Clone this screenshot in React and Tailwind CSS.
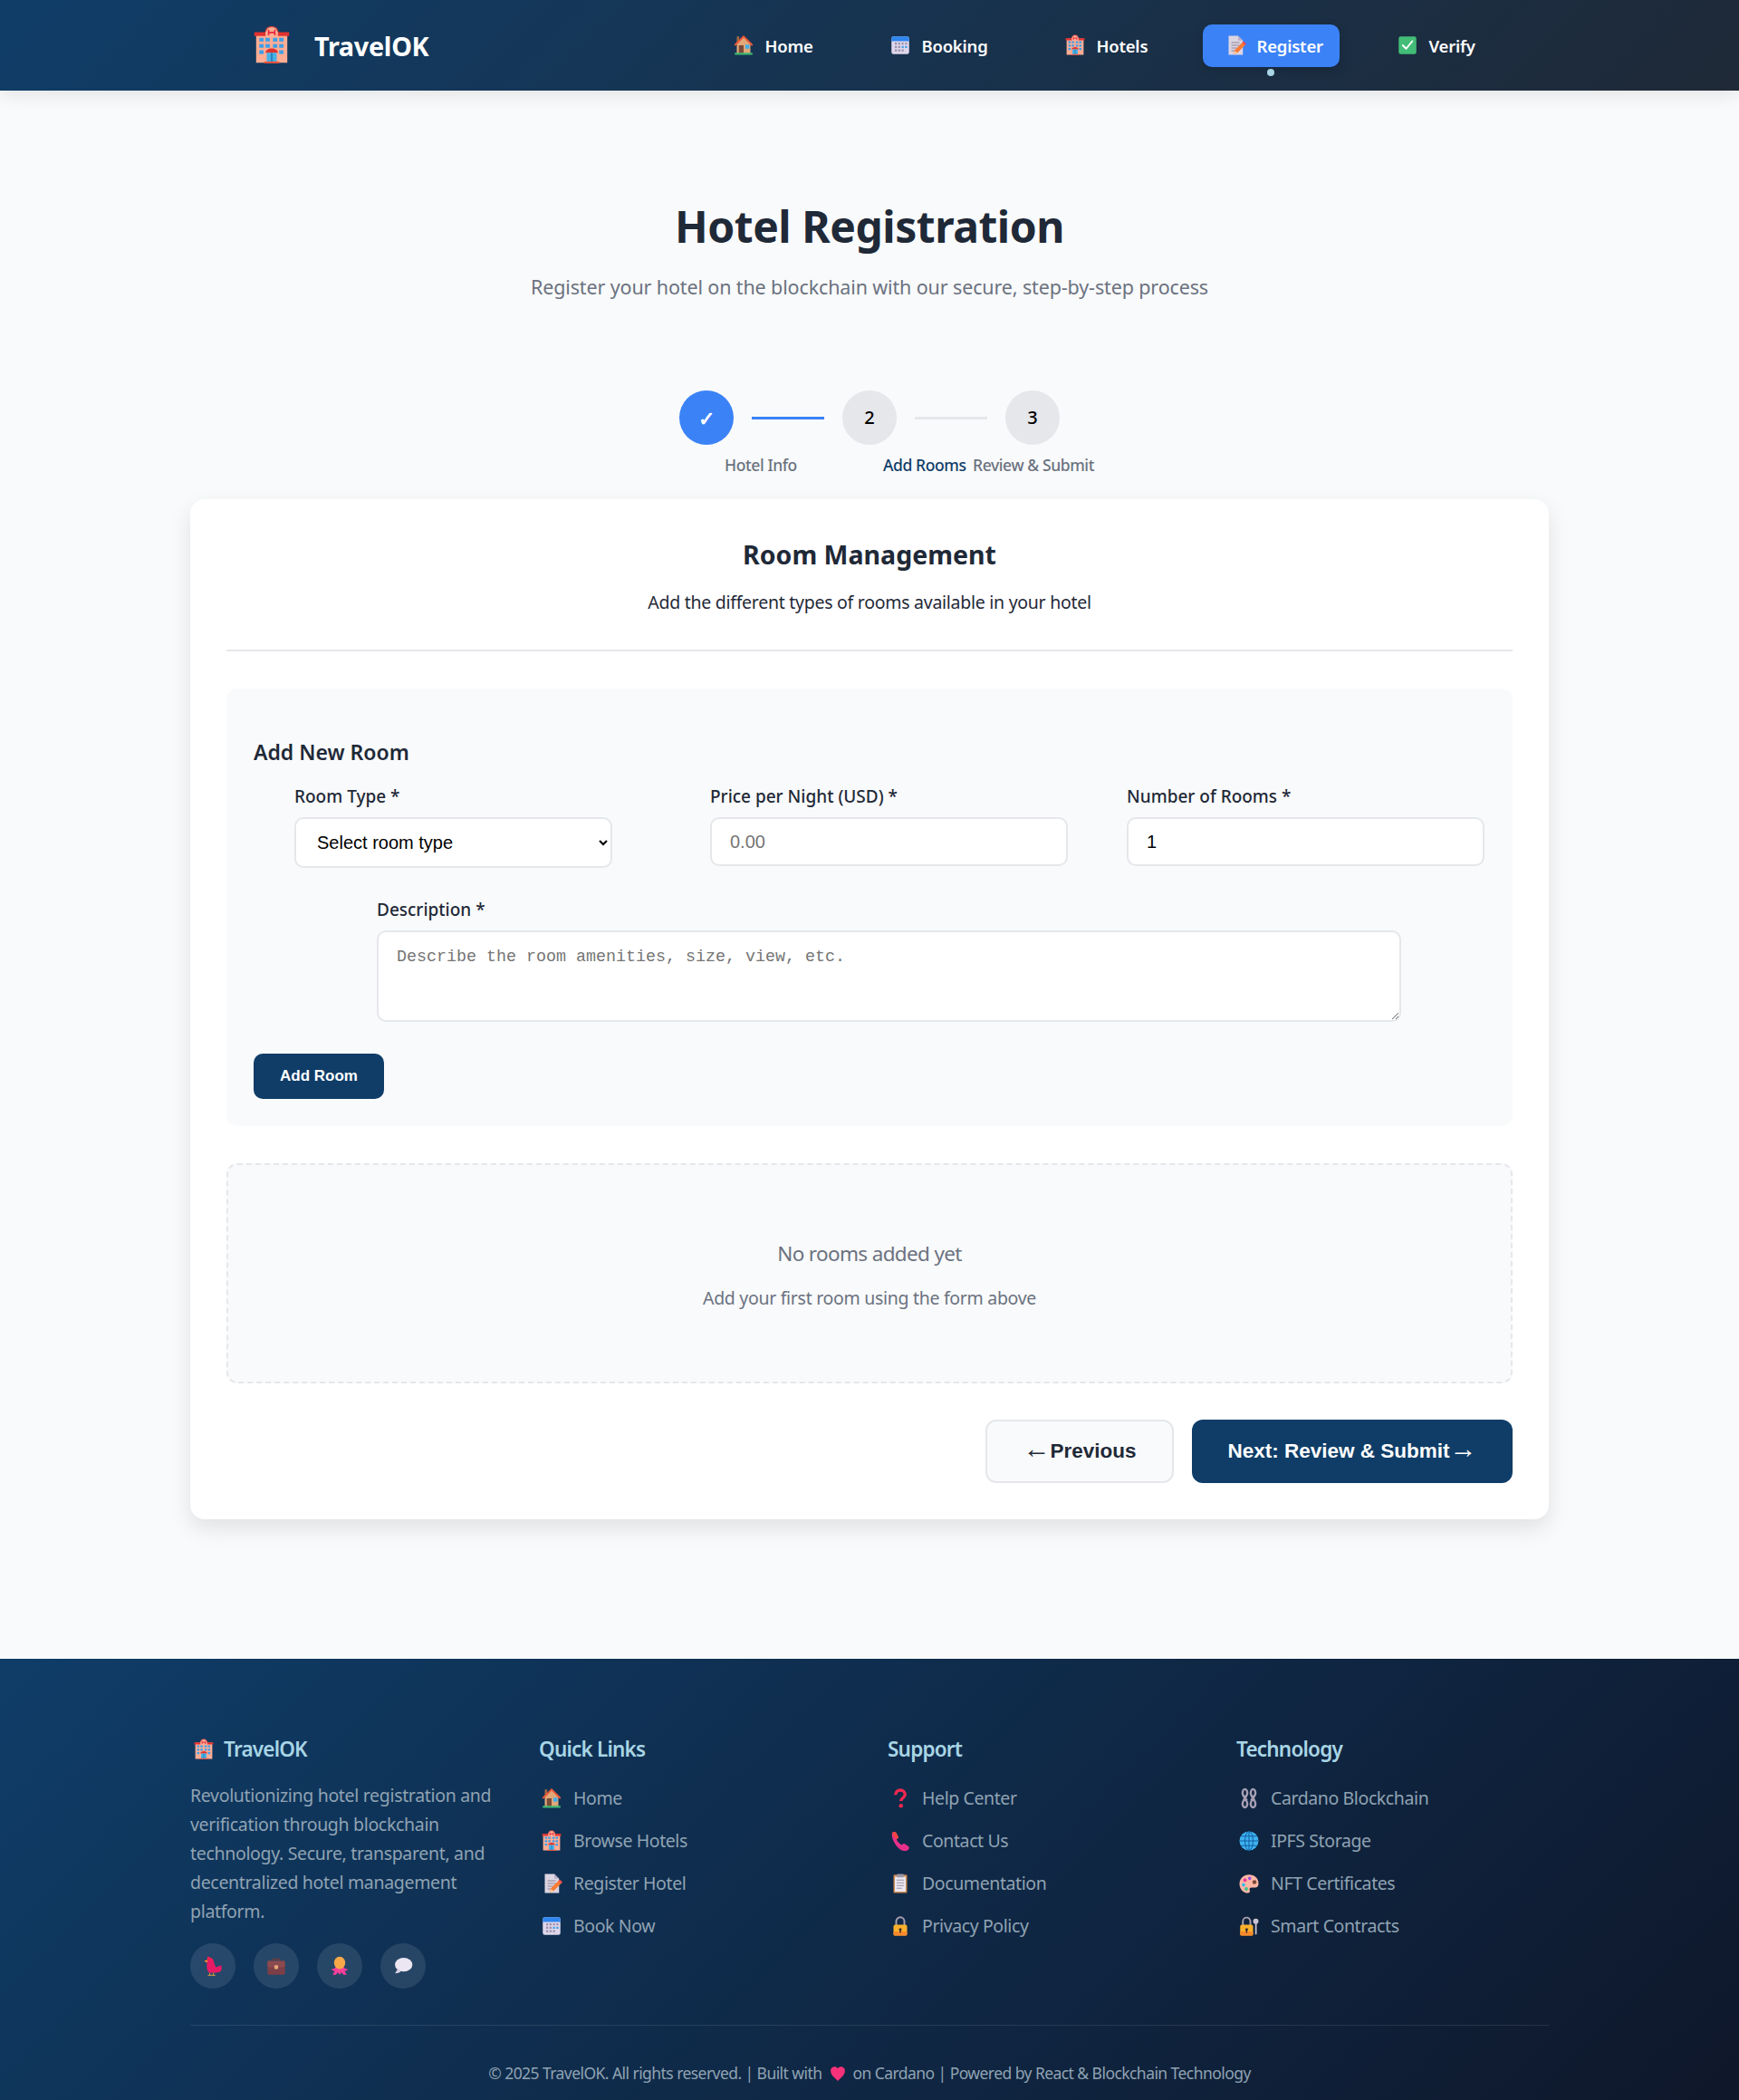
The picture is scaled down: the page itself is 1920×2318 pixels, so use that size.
import React from 'react'

const SANS = "font-['Noto_Sans',sans-serif]"

function Hotel({ className }) {
  const win = [[6, 10], [6, 15], [6, 20], [22, 10], [22, 15], [22, 20], [11, 10], [17, 10], [11, 15], [17, 15]]
  return (
    <svg viewBox="0 0 32 32" className={className}>
      <rect x="3.500" y="6" width="25" height="24" fill="#ffad94" />
      <path d="M11 6c0-3 2-5 5-5s5 2 5 5z" fill="#ffad94" stroke="#c8423a" strokeWidth="1" />
      <path d="M2 5.500h9.500v3H2zM20.500 5.500H30v3h-9.500z" fill="#e0322f" />
      <path d="M11 8.500h10V5h-10z" fill="#ffad94" />
      <path d="M13.500 3.500v4.500M18.500 3.500v4.500M13.500 5.700h5" stroke="#e8283f" strokeWidth="1.200" fill="none" />
      {win.map(([x, y]) => (
        <rect key={`${x}-${y}`} x={x} y={y} width="3.500" height="3" fill="#3f9fe8" />
      ))}
      <path d="M11 22c0-2 2-3.500 5-3.500s5 1.500 5 3.500z" fill="#e0322f" />
      <rect x="12" y="22" width="8" height="8" fill="#46b0e8" />
      <rect x="15.500" y="22" width="1" height="8" fill="#1f6ea8" />
      <rect x="10" y="29" width="12" height="1.500" fill="#f0503c" />
    </svg>
  )
}

function House({ className }) {
  return (
    <svg viewBox="0 0 32 32" className={className}>
      <rect x="6" y="3" width="3.500" height="9" fill="#a56a43" />
      <path d="M6 14 16 4l10 10v14H6z" fill="#e0a878" />
      <path d="M3 16 16 3l13 13" fill="none" stroke="#f0583a" strokeWidth="2.400" />
      <rect x="9" y="16" width="7" height="12" fill="#7a4a38" />
      <rect x="18.500" y="15" width="6" height="6" fill="#45aeea" />
      <rect x="3" y="27" width="26" height="3" fill="#3fb871" />
    </svg>
  )
}

function Calendar({ className }) {
  const cells = [10, 15, 20]
  return (
    <svg viewBox="0 0 32 32" className={className}>
      <rect x="3" y="3" width="26" height="26" rx="3" fill="#ded6ea" />
      <path d="M3 10V6a3 3 0 0 1 3-3h20a3 3 0 0 1 3 3v4z" fill="#2f86ee" />
      {cells.map((x) =>
        [13, 18, 23].map((y) => (
          <rect key={`${x}-${y}`} x={x - 2} y={y - 1} width="3" height="3" fill={x === 20 && y === 18 ? '#3f9fe8' : '#9b91ad'} />
        ))
      )}
      <rect x="23" y="12" width="3" height="3" fill="#9b91ad" />
      <rect x="23" y="17" width="3" height="3" fill="#3f9fe8" />
    </svg>
  )
}

function Memo({ className }) {
  return (
    <svg viewBox="0 0 32 32" className={className}>
      <path d="M6 2h14l7 7v21H6z" fill="#dcd5e3" />
      <path d="M20 2v7h7z" fill="#b8aec5" />
      <path d="M10 12h12M10 16h12M10 20h8M10 24h5" stroke="#8f8799" strokeWidth="1.600" />
      <path d="m13 29 2-6L27 11l4 4-12 12z" fill="#f97b34" />
      <path d="m26 12 2-2 4 4-2 2z" fill="#ef4a52" />
      <path d="m13 30 2-6 4 3z" fill="#f6c9a0" />
    </svg>
  )
}

function Verify({ className }) {
  return (
    <svg viewBox="0 0 32 32" className={className}>
      <rect x="3" y="3" width="26" height="26" rx="3" fill="#43bd77" />
      <path d="m9 16 5 5 9-11" fill="none" stroke="#fff" strokeWidth="2.600" strokeLinecap="round" strokeLinejoin="round" />
    </svg>
  )
}

function Question({ className }) {
  return (
    <svg viewBox="0 0 32 32" className={className}>
      <path d="M9 11c0-4 3-7 7-7s7 3 7 6.500c0 4.500-6 5-6 9.500" fill="none" stroke="#f02850" strokeWidth="4.500" />
      <circle cx="17" cy="27" r="3" fill="#f02850" />
    </svg>
  )
}

function Phone({ className }) {
  return (
    <svg viewBox="0 0 32 32" className={className}>
      <path d="M4 4c2-2 5-2 6 0l3 6c.5 1.500-1 3-2.500 3.500 1 3 4 7 8 8.500 1-1.500 3-2.500 4.500-1.500l5 3.500c2 1.500 1 4-1 5.500-3 2-7 1.500-11-1C9 24 2 12 4 4z" fill="#e8308a" />
      <path d="M4 4c2-2 5-2 6 0l3 6c.5 1.500-1 3-2.500 3.500C8 12 5 8 4 4z" fill="#f0453f" />
    </svg>
  )
}

function Clipboard({ className }) {
  return (
    <svg viewBox="0 0 32 32" className={className}>
      <rect x="6" y="3" width="20" height="27" rx="1.500" fill="#c98850" />
      <rect x="8" y="6" width="16" height="22" fill="#ece7f0" />
      <rect x="11" y="2" width="10" height="5" rx="1" fill="#9a94a3" />
      <path d="M10.500 11h11M10.500 15h11M10.500 19h11M10.500 23h8" stroke="#9b93a6" strokeWidth="1.500" />
    </svg>
  )
}

function Lock({ className }) {
  return (
    <svg viewBox="0 0 32 32" className={className}>
      <path d="M10 15V9a6 6 0 0 1 12 0v6" fill="none" stroke="#a89fb0" strokeWidth="2.600" />
      <rect x="6" y="14" width="20" height="16" rx="2.500" fill="#fbb02c" />
      <rect x="6" y="24" width="20" height="6" rx="2.500" fill="#f98a2c" />
      <circle cx="16" cy="21" r="2" fill="#3d2a30" />
      <rect x="15" y="21" width="2" height="5" fill="#3d2a30" />
    </svg>
  )
}

function LockKey({ className }) {
  return (
    <svg viewBox="0 0 32 32" className={className}>
      <path d="M7 15V9a5.500 5.500 0 0 1 11 0v6" fill="none" stroke="#a89fb0" strokeWidth="2.600" />
      <rect x="3" y="14" width="19" height="16" rx="2.500" fill="#fbb02c" />
      <rect x="3" y="24" width="19" height="6" rx="2.500" fill="#f98a2c" />
      <circle cx="12.500" cy="21" r="2" fill="#3d2a30" />
      <rect x="11.500" y="21" width="2" height="5" fill="#3d2a30" />
      <circle cx="26" cy="9" r="4" fill="#c9c2d1" />
      <path d="M25 12h2.400v15L26 29l-1-2z" fill="#c9c2d1" />
    </svg>
  )
}

function Chain({ className }) {
  return (
    <svg viewBox="0 0 32 32" className={className} fill="none" stroke="#a79fb5" strokeWidth="3.200">
      <ellipse cx="10" cy="8" rx="3.500" ry="5.500" />
      <ellipse cx="22" cy="8" rx="3.500" ry="5.500" />
      <path d="m8 13 5 6M24 13l-5 6M12 13l-4 6M20 13l4 6" />
      <ellipse cx="10" cy="24" rx="3.500" ry="5.500" />
      <ellipse cx="22" cy="24" rx="3.500" ry="5.500" />
    </svg>
  )
}

function Globe({ className }) {
  return (
    <svg viewBox="0 0 32 32" className={className}>
      <circle cx="16" cy="16" r="14" fill="#3fb2f0" />
      <g fill="none" stroke="#0f5d9e" strokeWidth="1.300">
        <ellipse cx="16" cy="16" rx="6" ry="14" />
        <path d="M16 2v28M2 16h28M4.500 9h23M4.500 23h23" />
      </g>
    </svg>
  )
}

function Palette({ className }) {
  return (
    <svg viewBox="0 0 32 32" className={className}>
      <path d="M16 3C8 3 2 9 2 16.500S8 30 14 30c3 0 4-2 3-4s0-4 3-4h5c3 0 5-2 5-6C30 8 24 3 16 3z" fill="#ffb7a5" />
      <circle cx="10" cy="11" r="2.600" fill="#f0389a" />
      <circle cx="17" cy="8.500" r="2.400" fill="#a44fe0" />
      <circle cx="8" cy="18" r="2.600" fill="#3fb8e8" />
      <circle cx="12" cy="24" r="2.600" fill="#3fc48a" />
      <circle cx="24" cy="14" r="3" fill="#7b4a3a" />
    </svg>
  )
}

function Bird({ className }) {
  return (
    <svg viewBox="0 0 32 32" className={className}>
      <path d="m2 8 5-1c1-4 8-6 10 0 1 4 2 8 4 11l9-3v6c0 4-5 6-11 6H12C7 27 5 18 7 11z" fill="#e81a66" />
      <path d="M7 1c3 0 7 2 9 5l-9 1z" fill="#f02050" />
      <path d="m2 8 5-2v5z" fill="#ff9a1f" />
      <path d="M11 27v4M17 27v4M8 31h12" stroke="#ffae3a" strokeWidth="1.200" />
    </svg>
  )
}

function Briefcase({ className }) {
  return (
    <svg viewBox="0 0 32 32" className={className}>
      <path d="M11 8V5h10v3" fill="none" stroke="#6d3b3b" strokeWidth="2" />
      <rect x="2" y="8" width="28" height="22" rx="2" fill="#7c3f47" />
      <rect x="2" y="8" width="28" height="10" rx="2" fill="#8a4a4f" />
      <rect x="13" y="15" width="6" height="6" rx="1.500" fill="#e8a878" />
    </svg>
  )
}

function Octopus({ className }) {
  return (
    <svg viewBox="0 0 32 32" className={className}>
      <path d="M3 21c4 0 6-2 7-4h12c1 2 3 4 7 4-1 3-4 3-5 3 1 2 2 4 3 6h-5l-3-4-3 4-3-4-3 4H5c1-2 2-4 3-6-1 0-4 0-5-3z" fill="#f83f9a" />
      <ellipse cx="16" cy="11" rx="9" ry="10" fill="#f8a848" />
    </svg>
  )
}

function Bubble({ className }) {
  return (
    <svg viewBox="0 0 32 32" className={className}>
      <ellipse cx="17" cy="14" rx="14" ry="11" fill="#ece6f3" />
      <path d="m8 20-5 8c4 0 8-1 10-4z" fill="#d7cfe3" />
    </svg>
  )
}

function Heart({ className }) {
  return (
    <svg viewBox="0 0 32 32" className={className}>
      <path d="M16 30C7 22 2 17 2 10c0-5 4-8 8-8 3 0 5 1.500 6 4 1-2.500 3-4 6-4 4 0 8 3 8 8 0 7-5 12-14 20z" fill="#f8327a" />
    </svg>
  )
}

const navItems = [
  { label: 'Home', Icon: House, width: 'w-[134px]' },
  { label: 'Booking', Icon: Calendar, width: 'w-[154px]' },
  { label: 'Hotels', Icon: Hotel, width: 'w-[138px]' },
  { label: 'Register', Icon: Memo, width: 'w-[151px]', active: true },
  { label: 'Verify', Icon: Verify, width: 'w-[132px]' },
]

const footerColumns = [
  {
    title: 'Quick Links',
    links: [
      ['Home', House],
      ['Browse Hotels', Hotel],
      ['Register Hotel', Memo],
      ['Book Now', Calendar],
    ],
  },
  {
    title: 'Support',
    links: [
      ['Help Center', Question],
      ['Contact Us', Phone],
      ['Documentation', Clipboard],
      ['Privacy Policy', Lock],
    ],
  },
  {
    title: 'Technology',
    links: [
      ['Cardano Blockchain', Chain],
      ['IPFS Storage', Globe],
      ['NFT Certificates', Palette],
      ['Smart Contracts', LockKey],
    ],
  },
]

function Header() {
  return (
    <header className="h-[100px] bg-[linear-gradient(135deg,#0f3d68,#1f2937)] shadow-[0_4px_20px_rgba(0,0,0,0.1)] relative z-10">
      <div className="flex items-center h-full pl-[278px]">
        <Hotel className="w-[44px] h-[44px]" />
        <span className="ml-[25px] mt-[2px] text-[28.800px] font-bold text-white leading-none tracking-[-0.3px]">TravelOK</span>
        <nav className="flex items-center gap-[39px] ml-[312px]">
          {navItems.map(({ label, Icon, width, active }) => (
            <div
              key={label}
              className={`relative h-[47px] flex items-center pl-[24px] rounded-[10px] text-[18.500px] font-semibold text-white ${width} ${active ? 'bg-[#3b82f6] shadow-[0_4px_12px_rgba(0,0,0,0.15)]' : ''}`}
            >
              <Icon className="w-[24px] h-[24px] shrink-0" />
              <span className="ml-[11px] mt-[2px] tracking-[-0.2px]">{label}</span>
              {active && <span className="absolute left-[71px] bottom-[-10px] w-[8px] h-[8px] rounded-full bg-[#a8d5e5]" />}
            </div>
          ))}
        </nav>
      </div>
    </header>
  )
}

function Steps() {
  return (
    <>
      <div className="flex items-center justify-center mt-[99px] gap-[20px]">
        <div className="w-[60px] h-[60px] rounded-full bg-[#3b82f6] text-white flex items-center justify-center text-[22px] font-bold">✓</div>
        <div className="w-[80px] h-[3px] bg-[#3b82f6]" />
        <div className="w-[60px] h-[60px] rounded-full bg-[#e5e7eb] text-black flex items-center justify-center text-[20px] font-medium">2</div>
        <div className="w-[80px] h-[3px] bg-[#e5e7eb]" />
        <div className="w-[60px] h-[60px] rounded-full bg-[#e5e7eb] text-black flex items-center justify-center text-[20px] font-medium">3</div>
      </div>
      <div className="flex ml-[800px] mt-[9px] h-[26px] items-center text-[17.500px] font-medium text-[#6b7280] tracking-[-0.4px] whitespace-nowrap">
        <span className="w-[175px]">Hotel Info</span>
        <span className="w-[99px] text-[#0f3d68]">Add Rooms</span>
        <span>Review &amp; Submit</span>
      </div>
    </>
  )
}

function AddRoomForm() {
  const labelClass = 'block text-[19px] font-medium text-[#1f2937] leading-[26px] mb-[10px]'
  const fieldClass = "block w-full h-[54px] px-[20px] border-2 border-[#e5e7eb] rounded-[10px] bg-white text-[20px] text-black font-['Liberation_Sans',sans-serif] placeholder:text-[#757575]"
  return (
    <section className="mt-[41px] bg-[#f9fafb] rounded-[12px] pt-[55px] px-[30px] pb-[30px]">
      <h3 className="text-[23px] font-semibold text-[#1f2937] leading-[30px]">Add New Room</h3>
      <div className="flex mt-[21px] ml-[45px]">
        <div className="w-[351px]">
          <label className={labelClass}>Room Type *</label>
          <select className="block w-full h-[56px] pl-[19px] pr-[4px] border-2 border-[#e5e7eb] rounded-[10px] bg-white text-[20px] text-black font-['Liberation_Sans',sans-serif]">
            <option>Select room type</option>
          </select>
        </div>
        <div className="w-[395px] ml-[108px]">
          <label className={labelClass}>Price per Night (USD) *</label>
          <input className={fieldClass} placeholder="0.00" readOnly />
        </div>
        <div className="w-[395px] ml-[65px]">
          <label className={labelClass}>Number of Rooms *</label>
          <input className={fieldClass} defaultValue="1" />
        </div>
      </div>
      <div className="w-[1131px] ml-[136px] mt-[33px]">
        <label className={labelClass}>Description *</label>
        <textarea
          className="block w-full h-[101px] px-[20px] py-[16px] border-2 border-[#e5e7eb] rounded-[10px] bg-white text-[18.330px] leading-[24px] font-['Liberation_Mono',monospace] placeholder:text-[#757575]"
          placeholder="Describe the room amenities, size, view, etc."
          readOnly
        />
      </div>
      <button className="block mt-[35px] w-[144px] h-[50px] rounded-[10px] bg-[#0f3d68] text-white text-[17px] font-bold font-['Liberation_Sans',sans-serif]">Add Room</button>
    </section>
  )
}

function RoomCard() {
  return (
    <div className="w-[1500px] mx-auto mt-[25px] bg-white rounded-[16px] p-[40px] shadow-[0_10px_25px_rgba(0,0,0,0.1)]">
      <div className="border-b-2 border-[#e5e7eb] pb-[37px] text-center">
        <h2 className="text-[28.500px] font-bold text-[#1f2937] leading-[44px] -mt-[1px]">Room Management</h2>
        <p className="mt-[16px] text-[19.500px] text-[#1f2937] leading-[30px] tracking-[-0.27px]">Add the different types of rooms available in your hotel</p>
      </div>
      <AddRoomForm />
      <div className="mt-[41px] h-[243px] border-2 border-dashed border-[#e5e7eb] rounded-[12px] bg-[#f9fafb] flex flex-col items-center pt-[82px]">
        <p className="text-[22.500px] text-[#6b7280] leading-[32px] tracking-[-0.65px]">No rooms added yet</p>
        <p className="mt-[18px] text-[19.500px] text-[#6b7280] leading-[30px] tracking-[-0.3px]">Add your first room using the form above</p>
      </div>
      <div className="flex justify-end gap-[20px] mt-[40px] font-['Liberation_Sans',sans-serif]">
        <button className="w-[208px] h-[70px] pb-[2px] rounded-[12px] border-2 border-[#e5e7eb] bg-[#f9fafb] text-[#1f2937] text-[22.500px] font-bold">
          <span className="inline-block text-[30px] leading-none font-normal">←</span>Previous
        </button>
        <button className="w-[354px] h-[70px] pb-[2px] rounded-[12px] bg-[#0f3d68] text-white text-[22.500px] font-bold">
          Next: Review &amp; Submit<span className="inline-block text-[30px] leading-none font-normal">→</span>
        </button>
      </div>
    </div>
  )
}

function Footer() {
  return (
    <footer className="h-[487px] bg-[linear-gradient(135deg,#0f3d68,#0f172a)]">
      <div className="w-[1500px] mx-auto pt-[81px]">
        <div className="grid grid-cols-4 gap-[40px] h-[323px]">
          <div>
            <div className="flex items-center h-[38px] text-[22.500px] font-semibold text-[#a8d5e5] tracking-[-0.8px]">
              <Hotel className="w-[24px] h-[24px] ml-[3px] mr-[10px]" />
              TravelOK
            </div>
            <p className="mt-[16px] text-[19.500px] leading-[32px] text-[#8fa3b3] tracking-[-0.32px] w-[345px]">
              Revolutionizing hotel registration and verification through blockchain technology. Secure, transparent, and decentralized hotel management platform.
            </p>
            <div className="flex gap-[20px] mt-[19px]">
              {[Bird, Briefcase, Octopus, Bubble].map((Icon, i) => (
                <div key={i} className="w-[50px] h-[50px] rounded-full bg-white/10 flex items-center justify-center">
                  <Icon className="w-[22px] h-[22px]" />
                </div>
              ))}
            </div>
          </div>
          {footerColumns.map((col) => (
            <div key={col.title}>
              <h4 className="h-[38px] flex items-center text-[22.500px] font-semibold text-[#a8d5e5] tracking-[-0.8px]">{col.title}</h4>
              <ul className="mt-[11px]">
                {col.links.map(([label, Icon]) => (
                  <li key={label} className="flex items-center h-[47px] text-[19.500px] text-[#8fa3b3] tracking-[-0.4px]">
                    <Icon className="w-[24px] h-[24px] ml-[2px] mr-[12px] shrink-0" />
                    {label}
                  </li>
                ))}
              </ul>
            </div>
          ))}
        </div>
        <div className="border-t border-white/10 flex items-center justify-center h-[83px] pb-[3px] pt-[26px] text-[17.500px] text-[#8fa3b3] tracking-[-0.56px]">
          © 2025 TravelOK. All rights reserved. | Built with
          <Heart className="w-[18px] h-[18px] mx-[8px]" />
          on Cardano | Powered by React &amp; Blockchain Technology
        </div>
      </div>
    </footer>
  )
}

export default function App() {
  return (
    <div className={`min-h-screen bg-[#f9fafb] ${SANS}`}>
      <Header />
      <main className="pt-[120px] pb-[154px]">
        <h1 className="text-center text-[48px] font-bold text-[#1f2937] leading-[60px] tracking-[-0.47px]">Hotel Registration</h1>
        <p className="text-center mt-[22px] text-[21.500px] text-[#6b7280] leading-[30px] tracking-[-0.13px]">Register your hotel on the blockchain with our secure, step-by-step process</p>
        <Steps />
        <RoomCard />
      </main>
      <Footer />
    </div>
  )
}
